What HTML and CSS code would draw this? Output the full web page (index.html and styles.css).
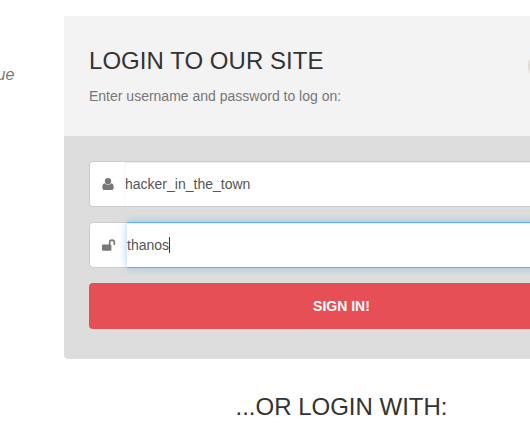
FILE: index.html
```html
<!DOCTYPE html>
<html lang="en">
<head>
<meta charset="utf-8">
<title>Login</title>
<link rel="stylesheet" href="styles.css">
</head>
<body>
<main class="page">
  <aside class="intro"><em>ue</em></aside>
  <section class="login">
    <div class="card">
      <header class="card-top">
        <div>
          <h3>LOGIN TO OUR SITE</h3>
          <p>Enter username and password to log on:</p>
        </div>
        <svg class="badge" viewBox="0 0 24 24"><circle cx="12" cy="12" r="12"/></svg>
      </header>
      <form class="card-bottom">
        <div class="field">
          <svg class="icon" viewBox="0 0 12 12"><path d="M6 0a3.200 3.200 0 0 1 3.200 3.200c0 1.800-1.400 3.300-3.200 3.300S2.800 5 2.800 3.200A3.200 3.200 0 0 1 6 0zM2.700 5.200Q4 6.900 6 6.900t3.300-1.700C11.200 5.400 11.700 7.500 11.700 9.700 11.700 11.200 10.700 12 9.400 12H2.600C1.300 12 .3 11.200.3 9.700.3 7.500.8 5.400 2.700 5.200z"/></svg>
          <span class="input">hacker_in_the_town</span>
        </div>
        <div class="field">
          <svg class="icon unlock" viewBox="0 0 14 12"><path d="M1 5.500h5.800V3.500a3.200 3.200 0 0 1 6.400 0v2q0 .6-.6.6h-.4q-.6 0-.6-.6v-2a1.600 1.600 0 0 0-3.200 0v2q1 0 1 1V11q0 .8-.8.800H.8Q0 11.800 0 11V6.500q0-1 1-1z"/></svg>
          <span class="input focused">thanos<i class="caret"></i></span>
        </div>
        <button type="button">SIGN IN!</button>
      </form>
    </div>
    <h3 class="social">...OR LOGIN WITH:</h3>
  </section>
</main>
</body>
</html>
```
FILE: styles.css
```css
* { box-sizing: border-box; }
body { margin: 0; background: #fff; font: 14px/20px "Liberation Sans", Arial, sans-serif; color: #777; }
.page { display: flex; width: 100%; height: 435px; padding-top: 16px; overflow: hidden; }
.intro { flex: 0 0 64px; padding-top: 49px; font-size: 16px; }
.intro em { margin-left: -3.500px; }
.login { flex: 0 0 555px; }
.card { overflow: hidden; border-radius: 4px; background: #ddd; }
.card-top { display: flex; justify-content: space-between; height: 120px; padding: 31px 61px 0 25px; background: #f3f3f3; }
h3 { margin: 0; color: #333; font-size: 24px; font-weight: 400; line-height: 28px; }
.card-top h3 { letter-spacing: .04px; }
.card-top p { margin: 11px 0 0; }
.badge { width: 30px; height: 30px; margin-top: 4px; fill: #ddd8d4; }
.card-bottom { display: flex; flex-direction: column; gap: 15px; height: 223px; padding: 25px; }
.field { display: flex; align-items: center; height: 46px; border: 1px solid #ccc; border-radius: 4px; background: #fff; }
.icon { width: 12px; height: 12px; margin: 0 11px 0 12px; fill: #777; }
.unlock { width: 14px; }
.input { flex: 1; line-height: 44px; color: #555; box-shadow: inset 0 1px 1px rgba(0,0,0,.075), -1px 0 #f8f8f8; }
.focused { display: flex; align-items: center; height: 46px; border: solid #66afe9; border-width: 1px 0; box-shadow: inset 0 1px 1px rgba(0,0,0,.075), 0 0 8px rgba(102,175,233,.6); }
.caret { width: 1px; height: 16px; background: #333; }
button { height: 46px; padding: 0; border: 0; border-radius: 4px; background: #e64f55; color: #fff; font: 700 14px/46px "Liberation Sans", Arial, sans-serif; }
.social { margin-top: 34px; text-align: center; }
```
